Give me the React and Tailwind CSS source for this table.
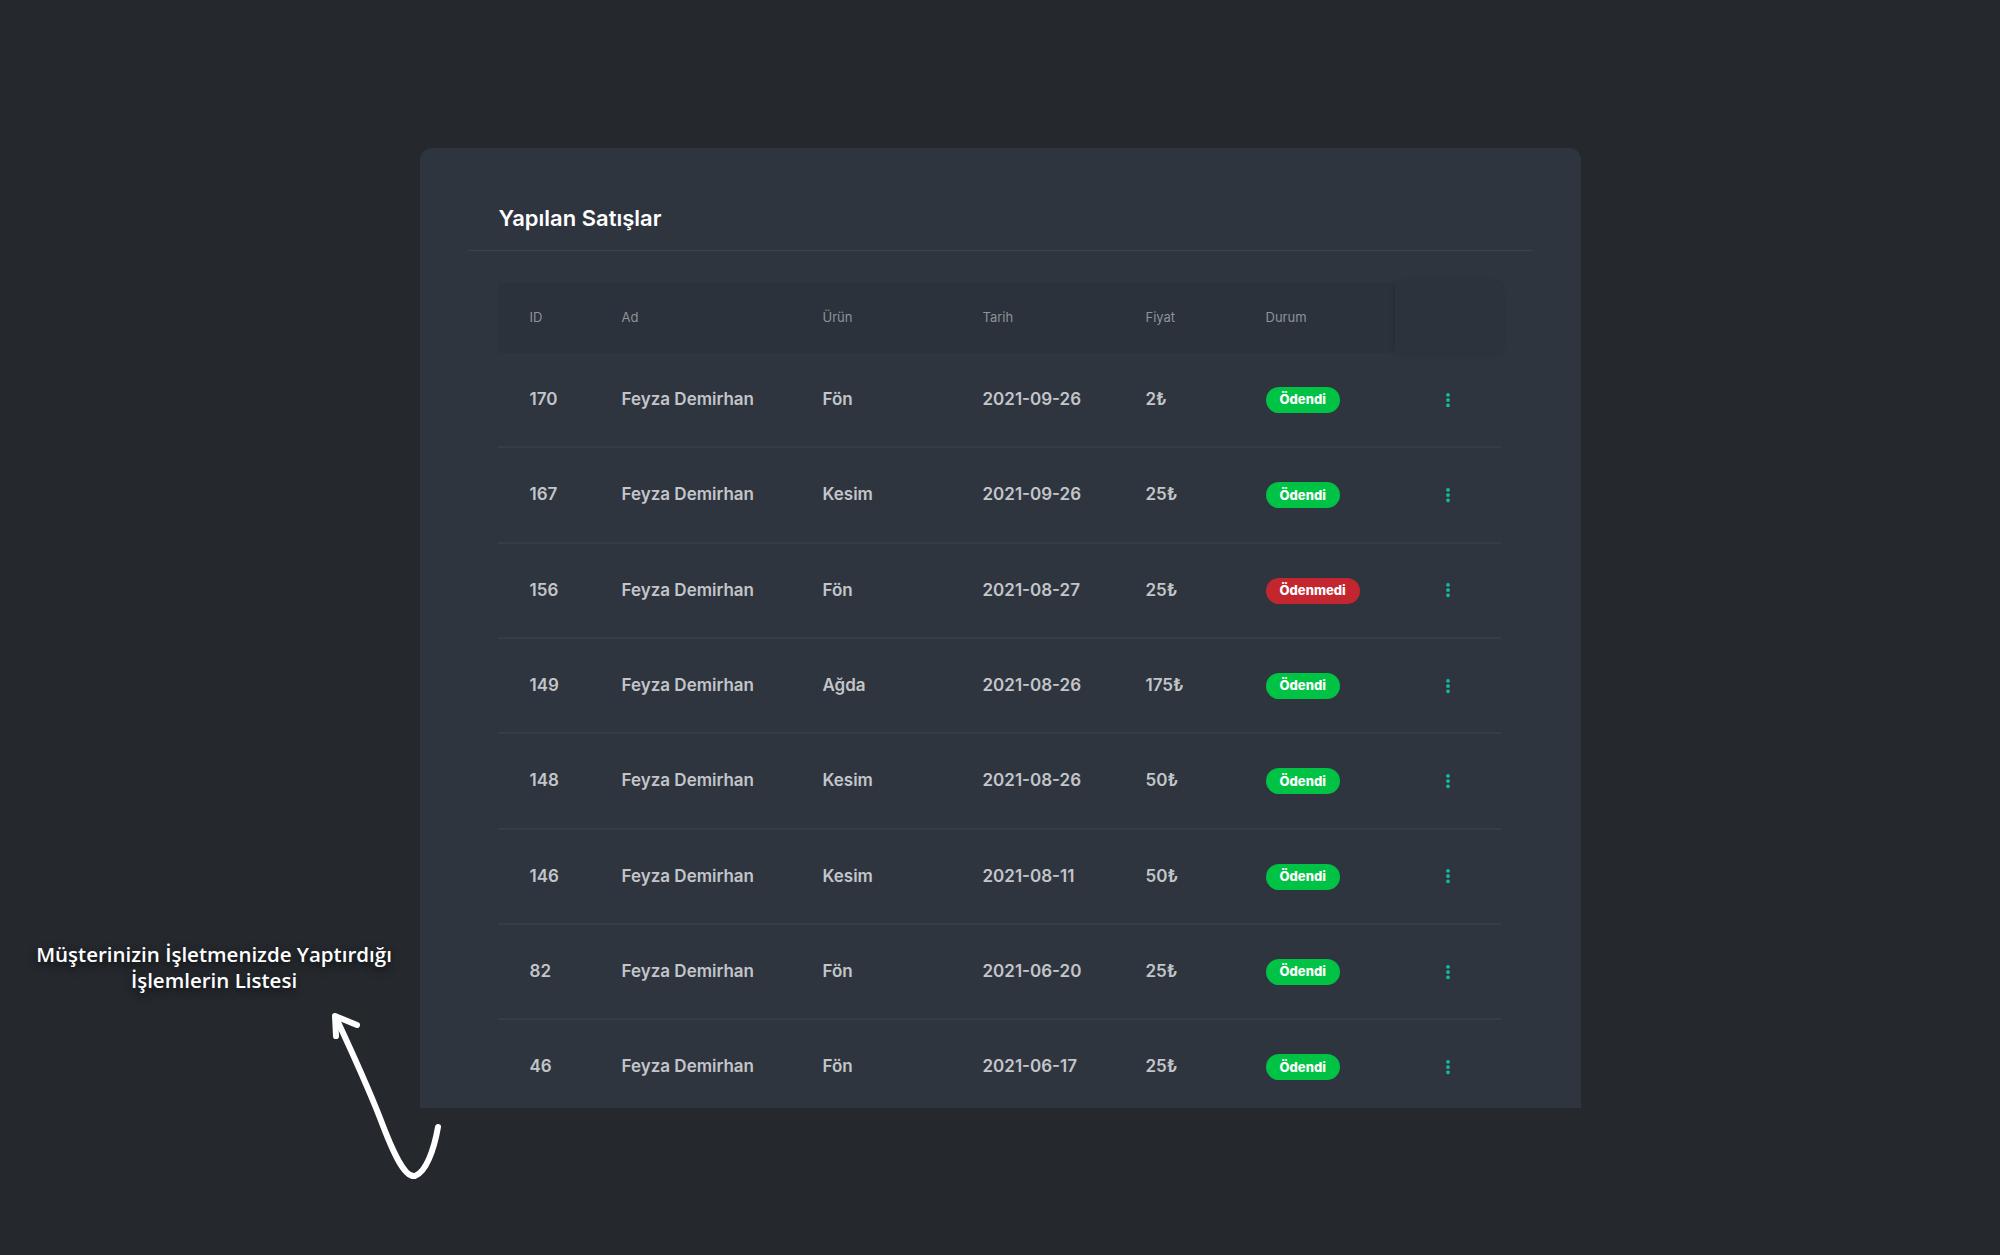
import { EllipsisVertical } from 'lucide-react';

const sales = [
  { id: 170, name: 'Feyza Demirhan', product: 'Fön', date: '2021-09-26', price: '2₺', paid: true },
  { id: 167, name: 'Feyza Demirhan', product: 'Kesim', date: '2021-09-26', price: '25₺', paid: true },
  { id: 156, name: 'Feyza Demirhan', product: 'Fön', date: '2021-08-27', price: '25₺', paid: false },
  { id: 149, name: 'Feyza Demirhan', product: 'Ağda', date: '2021-08-26', price: '175₺', paid: true },
  { id: 148, name: 'Feyza Demirhan', product: 'Kesim', date: '2021-08-26', price: '50₺', paid: true },
  { id: 146, name: 'Feyza Demirhan', product: 'Kesim', date: '2021-08-11', price: '50₺', paid: true },
  { id: 82, name: 'Feyza Demirhan', product: 'Fön', date: '2021-06-20', price: '25₺', paid: true },
  { id: 46, name: 'Feyza Demirhan', product: 'Fön', date: '2021-06-17', price: '25₺', paid: true },
];

const cols = 'grid grid-cols-[92px_201px_160px_163px_120px_129px_1fr] items-center pl-[32px]';

const StatusBadge = ({ paid }) =>
  paid ? (
    <span className="inline-flex h-[26px] items-center rounded-full bg-[#00c244] px-[14px] text-[13px] font-extrabold text-white">
      Ödendi
    </span>
  ) : (
    <span className="inline-flex h-[26px] items-center rounded-full bg-[#c4262f] px-[14px] text-[13px] font-extrabold text-white">
      Ödenmedi
    </span>
  );

const Annotation = () => (
  <>
    <div className="absolute left-0 top-[941px] w-[428px] text-center text-[20.5px] font-semibold leading-[26px] text-white [font-family:'Open_Sans',sans-serif] [text-shadow:0_3px_8px_rgba(0,0,0,0.7)]">
      Müşterinizin İşletmenizde Yaptırdığı
      <br />
      İşlemlerin Listesi
    </div>
    <svg className="absolute left-[300px] top-[1000px]" width="160" height="200" viewBox="300 1000 160 200" fill="none">
      <path
        d="M438 1127 C 434 1150, 426 1172, 415 1176 C 404 1178, 392 1150, 380 1118 C 365 1080, 350 1048, 337 1020"
        stroke="white"
        strokeWidth="6"
        strokeLinecap="round"
        strokeLinejoin="round"
      />
      <path d="M336 1036 L 335 1016 L 357 1025" stroke="white" strokeWidth="6" strokeLinecap="round" strokeLinejoin="round" />
    </svg>
  </>
);

export default function App() {
  return (
    <div className="relative min-h-screen overflow-hidden bg-[#25292e] pt-[148px] [font-family:Inter,'Open_Sans',sans-serif]">
      <div className="mx-auto h-[960px] w-[1161px] overflow-hidden rounded-t-[12px] bg-[#2e353f] px-[48px]">
        <div className="flex h-[103px] border-b border-[#3a424c] pl-[31px] pt-[55px]">
          <h2 className="text-[22px] font-semibold leading-[30px] text-white">Yapılan Satışlar</h2>
        </div>

        <div className="pl-[30px] pr-[32px] pt-[32px]">
          <div className={`${cols} h-[70px] bg-[#2b323b] text-[13px] text-[#8d9399]`}>
            <span>ID</span>
            <span>Ad</span>
            <span>Ürün</span>
            <span>Tarih</span>
            <span>Fiyat</span>
            <span>Durum</span>
            <span className="h-full bg-[#2c333c] shadow-[0_0_6px_rgba(0,0,0,0.15)]"></span>
          </div>

          {sales.map((s) => (
            <div key={s.id} className={`${cols} h-[95.33px] border-b-2 border-[#363d47] text-[17px] font-semibold text-[#c3c5c9]`}>
              <span>{s.id}</span>
              <span>{s.name}</span>
              <span>{s.product}</span>
              <span>{s.date}</span>
              <span>{s.price}</span>
              <span>
                <StatusBadge paid={s.paid} />
              </span>
              <span className="flex justify-center">
                <EllipsisVertical size={18} strokeWidth={3} className="text-[#14c4a4]" />
              </span>
            </div>
          ))}
        </div>
      </div>

      <Annotation />
    </div>
  );
}
